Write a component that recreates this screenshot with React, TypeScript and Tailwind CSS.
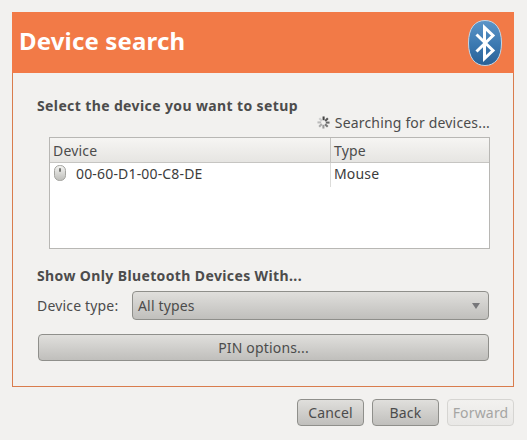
import type { ReactNode } from "react";

const font = { fontFamily: '"Noto Sans", "Open Sans", sans-serif' };

function BluetoothIcon() {
  return (
    <svg width="36" height="46" viewBox="0 0 36 46" className="block">
      <defs>
        <linearGradient id="btBlue" x1="0" y1="0" x2="0" y2="1">
          <stop offset="0" stopColor="#5c95c8" />
          <stop offset="0.55" stopColor="#3b78b0" />
          <stop offset="1" stopColor="#2a6196" />
        </linearGradient>
      </defs>
      <path
        d="M18 0.5C28 0.5 34.5 8 34.5 23S28 45.5 18 45.5 1.500 38 1.500 23 8 0.500 18 0.500Z"
        fill="url(#btBlue)"
        stroke="#c4d6e6"
        strokeWidth="1"
      />
      <path
        d="M9.500 14.500L26 30.500 17.500 38.500V7.500L26 15.500 9.500 31.500"
        fill="none"
        stroke="#ffffff"
        strokeWidth="3"
      />
    </svg>
  );
}

function MouseIcon() {
  return (
    <svg width="12" height="16" viewBox="0 0 12 16" className="block">
      <defs>
        <linearGradient id="mouseBody" x1="0" y1="0" x2="0" y2="1">
          <stop offset="0" stopColor="#f4f4f2" />
          <stop offset="1" stopColor="#bdbdb9" />
        </linearGradient>
      </defs>
      <rect x="0.5" y="0.5" width="11" height="15" rx="5" fill="url(#mouseBody)" stroke="#a3a39f" />
      <rect x="5" y="3" width="2" height="4" rx="1" fill="#777773" />
    </svg>
  );
}

function Spinner() {
  const shades = ["#444", "#555", "#666", "#777", "#999", "#aaa", "#bbb", "#ccc"];
  return (
    <svg width="13" height="13" viewBox="0 0 14 14" className="block">
      {shades.map((c, i) => (
        <rect
          key={i}
          x="6"
          y="0.500"
          width="2.200"
          height="4"
          fill={c}
          transform={`rotate(${i * 45} 7 7)`}
        />
      ))}
    </svg>
  );
}

function Button({ children, className }: { children: ReactNode; className: string }) {
  return (
    <button
      className={`flex items-center justify-center rounded-[4px] border border-[#8f8f8b] bg-gradient-to-b from-[#e0dfdc] to-[#c0bfbc] text-[14px] tracking-[0.17px] text-[#4c4c4c] ${className}`}
    >
      {children}
    </button>
  );
}

export default function App() {
  return (
    <div
      className="flex h-[440px] w-[527px] flex-col overflow-hidden bg-[#f2f1ef] px-3 pt-3 text-[#4c4c4c]"
      style={font}
    >
      <div className="h-[375px] w-[502px] border border-[#d97c4d]">
        <div className="-m-px flex h-[61px] items-center justify-between bg-[#f27a47] pl-[7px] pr-[11px]">
          <h1 className="mb-1 text-[24px] font-bold leading-none tracking-[0.15px] text-white">
            Device search
          </h1>
          <BluetoothIcon />
        </div>

        <div className="px-6 pt-[25px]">
          <p className="text-[14px] font-bold leading-[18px] tracking-[0.38px]">
            Select the device you want to setup
          </p>
          <div className="-mr-px -mt-[2px] flex h-[18px] items-center justify-end gap-[5px] text-[14px] tracking-[0.17px]">
            <Spinner />
            <span>Searching for devices...</span>
          </div>

          <div className="ml-3 mt-[6px] h-[112px] w-[441px] border border-[#b8b7b4] bg-white text-[14px] tracking-[0.17px]">
            <div className="flex h-[25px] border-b border-[#c6c5c2] bg-gradient-to-b from-[#f6f5f3] to-[#e6e5e2] leading-[26px]">
              <div className="w-[281px] border-r border-[#c6c5c2] pl-[3px]">Device</div>
              <div className="pl-[3px]">Type</div>
            </div>
            <div className="flex h-6 leading-[22px] text-[#3c3c3c]">
              <div className="flex w-[281px] items-start gap-[10px] border-r border-[#dcdcda] pl-[4px] pt-[2px]">
                <MouseIcon />
                <span className="-mt-[2px]">00-60-D1-00-C8-DE</span>
              </div>
              <div className="pl-[3px]">Mouse</div>
            </div>
          </div>

          <p className="mt-[18px] text-[14px] font-bold leading-[18px] tracking-[0.38px]">
            Show Only Bluetooth Devices With...
          </p>
          <div className="mt-[6px] flex items-center">
            <span className="w-[95px] text-[14px] tracking-[0.17px]">Device type:</span>
            <Button className="h-[29px] w-[357px] !justify-between pl-[5px] pr-[8px]">
              <span>All types</span>
              <span className="h-0 w-0 border-x-[4px] border-t-[6px] border-x-transparent border-t-[#77777a]" />
            </Button>
          </div>
          <Button className="ml-px mt-[14px] h-[27px] w-[451px]">PIN options...</Button>
        </div>
      </div>

      <div className="mr-px mt-[12px] flex justify-end gap-2">
        <Button className="h-[27px] w-[67px]">Cancel</Button>
        <Button className="h-[27px] w-[67px]">Back</Button>
        <Button className="h-[27px] w-[67px] !border-[#d6d5d2] from-[#f2f1ef] to-[#e9e8e6] !text-[#a5a5a3]">
          Forward
        </Button>
      </div>
    </div>
  );
}
